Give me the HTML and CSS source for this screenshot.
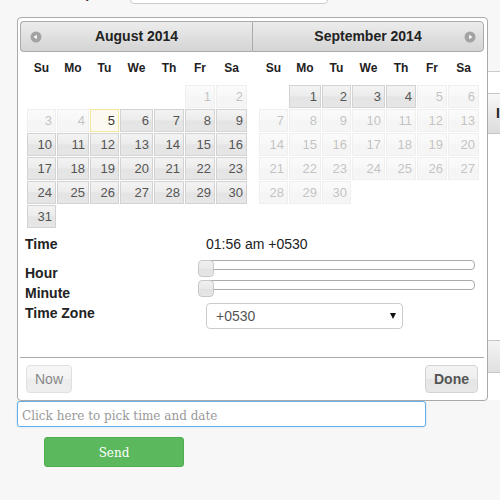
FILE: index.html
```html
<!DOCTYPE html>
<html lang="en">
<head>
<meta charset="utf-8">
<title>Pick time and date</title>
<link rel="stylesheet" href="styles.css">
</head>
<body>
<main class="page">
  <div class="top-row">
    <label class="top-label" for="pickup">Pickup</label>
    <input class="top-input" id="pickup" type="text">
  </div>
  <section class="panel">
    <div class="panel-head">Item</div>
    <div class="panel-body"></div>
    <div class="panel-foot"></div>
  </section>
  <input class="dt-input" type="text" placeholder="Click here to pick time and date" autofocus>
  <button class="send" type="button">Send</button>
</main>

<div class="datepicker">
  <div class="months">
    <div class="month">
      <div class="month-head first">
        <span class="nav prev"><svg width="12" height="12" viewBox="0 0 12 12"><circle cx="6" cy="6" r="5.5" fill="#a3a3a3"/><path d="M3.6 6 L6.8 3.7 V8.3 Z" fill="#fff"/></svg></span>
        <span class="title">August 2014</span>
        <span></span>
      </div>
      <div class="cal">
        <span class="dn">Su</span><span class="dn">Mo</span><span class="dn">Tu</span><span class="dn">We</span><span class="dn">Th</span><span class="dn">Fr</span><span class="dn">Sa</span>
        <span class="blank"></span><span class="blank"></span><span class="blank"></span><span class="blank"></span><span class="blank"></span><span class="day off">1</span><span class="day off">2</span>
        <span class="day off">3</span><span class="day off">4</span><a class="day today" href="#">5</a><a class="day" href="#">6</a><a class="day" href="#">7</a><a class="day" href="#">8</a><a class="day" href="#">9</a>
        <a class="day" href="#">10</a><a class="day" href="#">11</a><a class="day" href="#">12</a><a class="day" href="#">13</a><a class="day" href="#">14</a><a class="day" href="#">15</a><a class="day" href="#">16</a>
        <a class="day" href="#">17</a><a class="day" href="#">18</a><a class="day" href="#">19</a><a class="day" href="#">20</a><a class="day" href="#">21</a><a class="day" href="#">22</a><a class="day" href="#">23</a>
        <a class="day" href="#">24</a><a class="day" href="#">25</a><a class="day" href="#">26</a><a class="day" href="#">27</a><a class="day" href="#">28</a><a class="day" href="#">29</a><a class="day" href="#">30</a>
        <a class="day" href="#">31</a>
      </div>
    </div>
    <div class="month">
      <div class="month-head last">
        <span></span>
        <span class="title">September 2014</span>
        <span class="nav next"><svg width="12" height="12" viewBox="0 0 12 12"><circle cx="6" cy="6" r="5.5" fill="#a3a3a3"/><path d="M8.4 6 L5.2 3.7 V8.3 Z" fill="#fff"/></svg></span>
      </div>
      <div class="cal">
        <span class="dn">Su</span><span class="dn">Mo</span><span class="dn">Tu</span><span class="dn">We</span><span class="dn">Th</span><span class="dn">Fr</span><span class="dn">Sa</span>
        <span class="blank"></span><a class="day" href="#">1</a><a class="day" href="#">2</a><a class="day" href="#">3</a><a class="day" href="#">4</a><span class="day off">5</span><span class="day off">6</span>
        <span class="day off">7</span><span class="day off">8</span><span class="day off">9</span><span class="day off">10</span><span class="day off">11</span><span class="day off">12</span><span class="day off">13</span>
        <span class="day off">14</span><span class="day off">15</span><span class="day off">16</span><span class="day off">17</span><span class="day off">18</span><span class="day off">19</span><span class="day off">20</span>
        <span class="day off">21</span><span class="day off">22</span><span class="day off">23</span><span class="day off">24</span><span class="day off">25</span><span class="day off">26</span><span class="day off">27</span>
        <span class="day off">28</span><span class="day off">29</span><span class="day off">30</span>
      </div>
    </div>
  </div>

  <div class="tp">
    <div class="tp-labels">
      <div class="tp-label tp-label-time">Time</div>
      <div class="tp-label">Hour</div>
      <div class="tp-label">Minute</div>
      <div class="tp-label">Time Zone</div>
    </div>
    <div class="tp-values">
      <div class="tp-time">01:56 am +0530</div>
      <div class="slider slider-hour"><div class="track"></div><span class="handle"></span></div>
      <div class="slider slider-minute"><div class="track"></div><span class="handle"></span></div>
      <div class="tz">
        <select class="tz-select">
          <option>+0530</option>
        </select>
      </div>
    </div>
  </div>

  <div class="pane">
    <button class="btn btn-now" type="button">Now</button>
    <button class="btn btn-done" type="button">Done</button>
  </div>
</div>
</body>
</html>
```

FILE: styles.css
```css
html, body {
  overflow: hidden;
}

body {
  margin: 0;
  background: #f7f7f7;
  font-family: "Liberation Sans", Arial, sans-serif;
  color: #222;
}

.page {
  padding-left: 17px;
}

/* background form content */
.top-row {
  display: flex;
  align-items: flex-end;
  height: 30px;
  margin-top: -26px;
}

.top-label {
  margin-left: 31px;
  margin-bottom: 3px;
  font-size: 14px;
  font-weight: bold;
  line-height: 16px;
  color: #333;
}

.top-input {
  box-sizing: border-box;
  width: 198px;
  height: 30px;
  margin-left: 36px;
  border: 1px solid #ccc;
  border-radius: 4px;
  background: #fff;
}

.panel {
  box-sizing: border-box;
  width: 120px;
  height: 329px;
  margin: 67px 0 0 471px;
  padding-top: 21px;
  border-top: 1px solid #ccc;
  background: #fff;
}

.panel-head {
  box-sizing: border-box;
  height: 41px;
  padding-left: 8px;
  border-top: 1px solid #c5c5c5;
  border-bottom: 1px solid #c5c5c5;
  background: linear-gradient(#f8f8f8, #dcdcdc);
  font-size: 14px;
  font-weight: bold;
  line-height: 39px;
  color: #222;
}

.panel-body {
  height: 206px;
}

.panel-foot {
  box-sizing: border-box;
  height: 33px;
  border-top: 1px solid #c5c5c5;
  border-bottom: 1px solid #c5c5c5;
  background: linear-gradient(#f4f4f4, #e0e0e0);
}

.dt-input {
  display: block;
  box-sizing: border-box;
  width: 409px;
  height: 26px;
  margin: 1px 0 0;
  padding: 3px 4px 0;
  border: 1px solid #66afe9;
  border-radius: 3px;
  background: #fff;
  box-shadow: 0 0 2px rgba(102, 175, 233, 0.45);
  outline: none;
  font-family: "DejaVu Serif", serif;
  font-size: 12px;
  color: #555;
}

.dt-input::placeholder {
  color: #999;
}

.send {
  display: block;
  box-sizing: border-box;
  width: 140px;
  height: 30px;
  margin: 10px 0 0 27px;
  padding-top: 2px;
  border: 1px solid #4cae4c;
  border-radius: 3px;
  background: #5cb85c;
  font-family: "DejaVu Serif", serif;
  font-size: 12px;
  color: #fff;
}

/* datepicker popup */
.datepicker {
  position: absolute;
  top: 17px;
  left: 17px;
  box-sizing: border-box;
  width: 471px;
  padding: 3px 3px 4px 2px;
  border: 1px solid #aaa;
  border-radius: 4px;
  background: #fff;
  color: #222;
}

.months {
  display: flex;
}

.month {
  width: 232px;
}

.month-head {
  box-sizing: border-box;
  height: 31px;
  display: grid;
  grid-template-columns: 1fr auto 1fr;
  align-items: center;
  border: 1px solid #aaa;
  background: linear-gradient(#ececec, #d4d4d4);
}

.month-head.first {
  border-right: none;
  border-radius: 4px 0 0 4px;
}

.month-head.last {
  border-radius: 0 4px 4px 0;
}

.title {
  margin-bottom: 2px;
  font-size: 14px;
  font-weight: bold;
  color: #222;
}

.nav {
  display: flex;
}

.nav.prev {
  justify-self: start;
  margin-left: 9px;
}

.nav.next {
  justify-self: end;
  margin-right: 7px;
}

.cal {
  display: grid;
  grid-template-columns: 29px 32px 29px 33px 30px 30px 31px;
  grid-template-rows: 32px;
  grid-auto-rows: 23px;
  gap: 1px;
  margin-left: 7px;
}

.dn {
  align-self: center;
  text-align: center;
  font-size: 12px;
  font-weight: bold;
  color: #222;
}

.day {
  box-sizing: border-box;
  padding-right: 3px;
  border: 1px solid #d3d3d3;
  background: linear-gradient(#f3f3f3 0%, #ececec 48%, #e4e4e4 52%, #e6e6e6 100%);
  font-size: 13px;
  line-height: 21px;
  text-align: right;
  text-decoration: none;
  color: #555;
}

.day.today {
  border-color: #f5e79e;
  background: #fcfaf0;
  color: #363636;
}

.day.off {
  opacity: 0.35;
}

/* time picker */
.tp {
  display: flex;
  padding: 6px 0 0 5px;
}

.tp-labels {
  width: 181px;
}

.tp-label {
  font-size: 14px;
  font-weight: bold;
  line-height: 20px;
  color: #222;
}

.tp-label-time {
  margin-bottom: 9px;
}

.tp-values {
  width: 269px;
}

.tp-time {
  font-size: 14px;
  line-height: 20px;
  color: #222;
}

.slider {
  position: relative;
  height: 17px;
}

.slider-hour {
  margin-top: 6px;
}

.slider-minute {
  margin-top: 3px;
}

.track {
  box-sizing: border-box;
  height: 10px;
  margin-top: 3px;
  border: 1px solid #aaa;
  border-radius: 4px;
  background: #fff;
}

.handle {
  position: absolute;
  top: 0;
  left: -8px;
  box-sizing: border-box;
  width: 16px;
  height: 17px;
  border: 1px solid #c8c8c8;
  border-radius: 4px;
  background: linear-gradient(#f0f0f0 0%, #e9e9e9 50%, #e2e2e2 51%, #e6e6e6 100%);
}

.tz {
  position: relative;
  width: 197px;
  margin-top: 6px;
}

.tz::after {
  content: "";
  position: absolute;
  top: 10px;
  right: 7px;
  border-left: 3.5px solid transparent;
  border-right: 3.5px solid transparent;
  border-top: 6px solid #111;
  pointer-events: none;
}

.tz-select {
  display: block;
  box-sizing: border-box;
  width: 100%;
  height: 26px;
  padding: 0 0 0 9px;
  border: 1px solid #ccc;
  border-radius: 4px;
  background: #fff;
  appearance: none;
  -webkit-appearance: none;
  font-family: "Liberation Sans", Arial, sans-serif;
  font-size: 14px;
  color: #555;
}

/* button pane */
.pane {
  display: flex;
  justify-content: space-between;
  margin-top: 28px;
  padding: 0 2px;
  border-top: 1px solid #aaa;
}

.btn {
  box-sizing: border-box;
  height: 28px;
  margin: 7px 4px 3px;
  padding: 0 8px;
  border: 1px solid #d3d3d3;
  border-radius: 4px;
  background: linear-gradient(#f4f4f4 0%, #eeeeee 50%, #e5e5e5 51%, #e8e8e8 100%);
  font-family: "Liberation Sans", Arial, sans-serif;
  font-size: 14px;
  color: #555;
}

.btn-now {
  opacity: 0.7;
  font-weight: normal;
}

.btn-done {
  font-weight: bold;
}
```
